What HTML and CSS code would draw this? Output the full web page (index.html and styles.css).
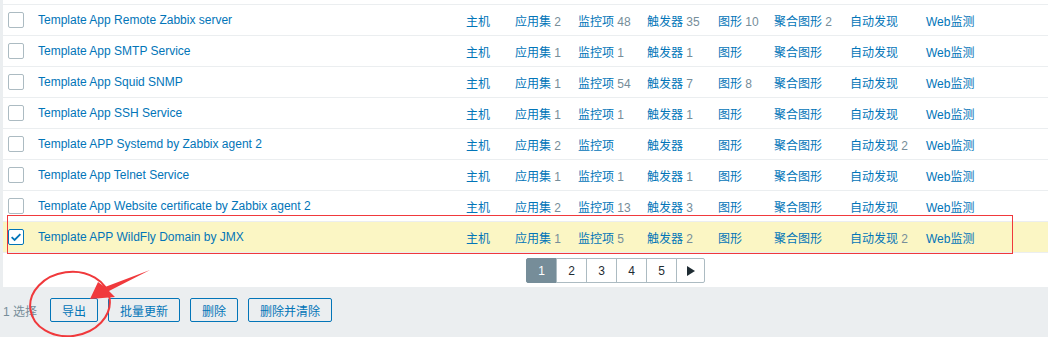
FILE: index.html
```html
<!DOCTYPE html>
<html lang="zh">
<head>
<meta charset="utf-8">
<link rel="stylesheet" href="styles.css">
</head>
<body>
<div class="page">
  <div class="panel">
    <div class="table">
      <div class="row">
        <span class="cb"></span>
        <a class="name">Template App Remote Zabbix server</a>
        <a class="lnk">主机</a>
        <span><a class="lnk">应用集</a> <span class="cnt">2</span></span>
        <span><a class="lnk">监控项</a> <span class="cnt">48</span></span>
        <span><a class="lnk">触发器</a> <span class="cnt">35</span></span>
        <span><a class="lnk">图形</a> <span class="cnt">10</span></span>
        <span><a class="lnk">聚合图形</a> <span class="cnt">2</span></span>
        <a class="lnk">自动发现</a>
        <a class="lnk">Web监测</a>
      </div>
      <div class="row">
        <span class="cb"></span>
        <a class="name">Template App SMTP Service</a>
        <a class="lnk">主机</a>
        <span><a class="lnk">应用集</a> <span class="cnt">1</span></span>
        <span><a class="lnk">监控项</a> <span class="cnt">1</span></span>
        <span><a class="lnk">触发器</a> <span class="cnt">1</span></span>
        <a class="lnk">图形</a>
        <a class="lnk">聚合图形</a>
        <a class="lnk">自动发现</a>
        <a class="lnk">Web监测</a>
      </div>
      <div class="row">
        <span class="cb"></span>
        <a class="name">Template App Squid SNMP</a>
        <a class="lnk">主机</a>
        <span><a class="lnk">应用集</a> <span class="cnt">1</span></span>
        <span><a class="lnk">监控项</a> <span class="cnt">54</span></span>
        <span><a class="lnk">触发器</a> <span class="cnt">7</span></span>
        <span><a class="lnk">图形</a> <span class="cnt">8</span></span>
        <a class="lnk">聚合图形</a>
        <a class="lnk">自动发现</a>
        <a class="lnk">Web监测</a>
      </div>
      <div class="row">
        <span class="cb"></span>
        <a class="name">Template App SSH Service</a>
        <a class="lnk">主机</a>
        <span><a class="lnk">应用集</a> <span class="cnt">1</span></span>
        <span><a class="lnk">监控项</a> <span class="cnt">1</span></span>
        <span><a class="lnk">触发器</a> <span class="cnt">1</span></span>
        <a class="lnk">图形</a>
        <a class="lnk">聚合图形</a>
        <a class="lnk">自动发现</a>
        <a class="lnk">Web监测</a>
      </div>
      <div class="row">
        <span class="cb"></span>
        <a class="name">Template APP Systemd by Zabbix agent 2</a>
        <a class="lnk">主机</a>
        <span><a class="lnk">应用集</a> <span class="cnt">2</span></span>
        <a class="lnk">监控项</a>
        <a class="lnk">触发器</a>
        <a class="lnk">图形</a>
        <a class="lnk">聚合图形</a>
        <span><a class="lnk">自动发现</a> <span class="cnt">2</span></span>
        <a class="lnk">Web监测</a>
      </div>
      <div class="row">
        <span class="cb"></span>
        <a class="name">Template App Telnet Service</a>
        <a class="lnk">主机</a>
        <span><a class="lnk">应用集</a> <span class="cnt">1</span></span>
        <span><a class="lnk">监控项</a> <span class="cnt">1</span></span>
        <span><a class="lnk">触发器</a> <span class="cnt">1</span></span>
        <a class="lnk">图形</a>
        <a class="lnk">聚合图形</a>
        <a class="lnk">自动发现</a>
        <a class="lnk">Web监测</a>
      </div>
      <div class="row">
        <span class="cb"></span>
        <a class="name">Template App Website certificate by Zabbix agent 2</a>
        <a class="lnk">主机</a>
        <span><a class="lnk">应用集</a> <span class="cnt">2</span></span>
        <span><a class="lnk">监控项</a> <span class="cnt">13</span></span>
        <span><a class="lnk">触发器</a> <span class="cnt">3</span></span>
        <a class="lnk">图形</a>
        <a class="lnk">聚合图形</a>
        <a class="lnk">自动发现</a>
        <a class="lnk">Web监测</a>
      </div>
      <div class="row selected">
        <span class="cb checked"><svg viewBox="0 0 16 16" width="14" height="14"><path d="M3 8.2 L6.4 11.4 L13 4.6" fill="none" stroke="#0275b8" stroke-width="2"/></svg></span>
        <a class="name">Template APP WildFly Domain by JMX</a>
        <a class="lnk">主机</a>
        <span><a class="lnk">应用集</a> <span class="cnt">1</span></span>
        <span><a class="lnk">监控项</a> <span class="cnt">5</span></span>
        <span><a class="lnk">触发器</a> <span class="cnt">2</span></span>
        <a class="lnk">图形</a>
        <a class="lnk">聚合图形</a>
        <span><a class="lnk">自动发现</a> <span class="cnt">2</span></span>
        <a class="lnk">Web监测</a>
        <span class="mark"></span>
      </div>
    </div>
    <div class="paging">
      <span class="pg active">1</span>
      <span class="pg">2</span>
      <span class="pg">3</span>
      <span class="pg">4</span>
      <span class="pg">5</span>
      <span class="pg next"><svg viewBox="0 0 8 10" width="8" height="10"><path d="M0 0 L8 5 L0 10 Z" fill="#1f2c33"/></svg></span>
    </div>
  </div>
  <div class="footer">
    <span class="sel">1 选择</span>
    <button class="btn">导出</button>
    <button class="btn">批量更新</button>
    <button class="btn">删除</button>
    <button class="btn">删除并清除</button>
  </div>
  <svg class="annot" width="1048" height="337" viewBox="0 0 1048 337">
    <ellipse cx="70" cy="304" rx="40" ry="32" transform="rotate(-8 70 304)" fill="none" stroke="#f0393c" stroke-width="2"/>
    <polygon points="90,299 98,282 105,287 150,270 109,291 115,297" fill="#f0393c"/>
  </svg>
</div>
</body>
</html>
```
FILE: styles.css
```css
* { box-sizing: border-box; }
html, body { margin: 0; padding: 0; }
body {
  background: #ebeef0;
  font-family: "Liberation Sans", Arial, "Noto Sans CJK SC", sans-serif;
  font-size: 12px;
  color: #1f2c33;
}
.page {
  position: relative;
  width: 1048px;
  height: 337px;
  overflow: hidden;
}
.panel {
  margin-left: 3px;
  background: #fff;
  padding-top: 4px;
  padding-bottom: 4px;
}
.table { border-top: 1px solid #ebeef0; }
.row {
  position: relative;
  display: grid;
  grid-template-columns: 35px 428px 49px 63px 69px 71px 56px 76px 76px 1fr;
  align-items: center;
  height: 31px;
  border-bottom: 1px solid #ebeef0;
  white-space: nowrap;
}
.row.selected { background: #fbf6c4; }
.cb {
  margin-left: 5px;
  width: 16px;
  height: 16px;
  border: 1px solid #acbbc2;
  border-radius: 2px;
  background: #fff;
  display: flex;
  align-items: center;
  justify-content: center;
}
.cb.checked { border-color: #0275b8; }
.name, .lnk { color: #0275b8; text-decoration: none; }
.cnt { color: #768d99; }
.mark {
  position: absolute;
  left: 4px;
  top: -7px;
  width: 1006px;
  height: 39px;
  border: 1px solid #f0393c;
  pointer-events: none;
}
.paging {
  display: flex;
  justify-content: flex-start;
  margin-top: 5px;
  padding-left: 523px;
  height: 25px;
}
.paging .pg {
  width: 31px;
  height: 25px;
  display: flex;
  align-items: center;
  justify-content: center;
  border: 1px solid #acbbc2;
  margin-left: -1px;
  color: #1f2c33;
  background: #fff;
}
.paging .pg:first-child { border-radius: 2px 0 0 2px; margin-left: 0; }
.paging .pg:last-child { border-radius: 0 2px 2px 0; width: 29px; }
.paging .pg.active { background: #768d99; border-color: #768d99; color: #fff; }
.footer {
  display: flex;
  align-items: center;
  padding-left: 3px;
  margin-top: 11px;
  height: 24px;
}
.sel { color: #768d99; width: 47px; }
.btn {
  font: inherit;
  height: 24px;
  padding: 0 11px;
  border: 1px solid #0275b8;
  border-radius: 2px;
  background: transparent;
  color: #0275b8;
  margin-right: 10px;
}
.annot {
  position: absolute;
  left: 0;
  top: 0;
  pointer-events: none;
}
```
